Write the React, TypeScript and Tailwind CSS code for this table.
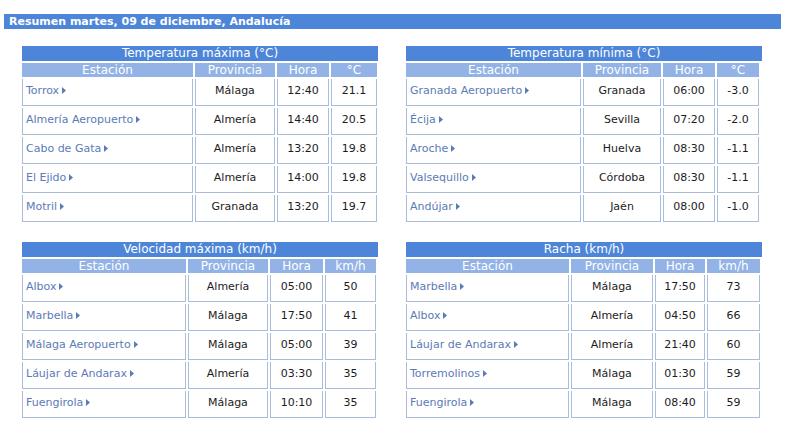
type Row = [string, string, string, string]

type Table = {
  title: string
  unit: string
  cols: string
  rows: Row[]
}

const tables: Table[] = [
  {
    title: "Temperatura máxima (°C)",
    unit: "°C",
    cols: "grid-cols-[171px_80px_52px_46px]",
    rows: [
      ["Torrox", "Málaga", "12:40", "21.1"],
      ["Almería Aeropuerto", "Almería", "14:40", "20.5"],
      ["Cabo de Gata", "Almería", "13:20", "19.8"],
      ["El Ejido", "Almería", "14:00", "19.8"],
      ["Motril", "Granada", "13:20", "19.7"],
    ],
  },
  {
    title: "Temperatura mínima (°C)",
    unit: "°C",
    cols: "grid-cols-[175px_78px_52px_42px]",
    rows: [
      ["Granada Aeropuerto", "Granada", "06:00", "-3.0"],
      ["Écija", "Sevilla", "07:20", "-2.0"],
      ["Aroche", "Huelva", "08:30", "-1.1"],
      ["Valsequillo", "Córdoba", "08:30", "-1.1"],
      ["Andújar", "Jaén", "08:00", "-1.0"],
    ],
  },
  {
    title: "Velocidad máxima (km/h)",
    unit: "km/h",
    cols: "grid-cols-[164px_80px_53px_51px]",
    rows: [
      ["Albox", "Almería", "05:00", "50"],
      ["Marbella", "Málaga", "17:50", "41"],
      ["Málaga Aeropuerto", "Málaga", "05:00", "39"],
      ["Láujar de Andarax", "Almería", "03:30", "35"],
      ["Fuengirola", "Málaga", "10:10", "35"],
    ],
  },
  {
    title: "Racha (km/h)",
    unit: "km/h",
    cols: "grid-cols-[163px_82px_50px_53px]",
    rows: [
      ["Marbella", "Málaga", "17:50", "73"],
      ["Albox", "Almería", "04:50", "66"],
      ["Láujar de Andarax", "Almería", "21:40", "60"],
      ["Torremolinos", "Málaga", "01:30", "59"],
      ["Fuengirola", "Málaga", "08:40", "59"],
    ],
  },
]

// little link arrow after station names
function Arrow() {
  return (
    <svg width="4" height="7" viewBox="0 0 4 7" className="relative top-[-1px] ml-[3px] inline-block">
      <path d="M0 0 L4 3.5 L0 7 Z" fill="#5b7bb6" />
    </svg>
  )
}

function DataTable({ t }: { t: Table }) {
  const cell =
    "h-[27px] border-x border-b border-[#a9bcd9] pt-[5px] leading-[14px] text-[#1c1c1c]"
  return (
    <div className="w-[356px]">
      <div className="h-[15px] bg-[#4d85d8] text-center text-[12px] leading-[15px] text-white">
        {t.title}
      </div>
      <div className={`mt-[2px] grid ${t.cols} gap-[2px]`}>
        {["Estación", "Provincia", "Hora", t.unit].map((h) => (
          <div
            key={h}
            className="h-[14px] bg-[#93b3e6] text-center text-[12px] leading-[14px] text-white"
          >
            {h}
          </div>
        ))}
        {t.rows.map((r) => (
          <div key={r[0]} className="contents">
            <div className={`${cell} pl-[3px]`}>
              <span className="text-[#5b7bb6]">{r[0]}</span>
              <Arrow />
            </div>
            <div className={`${cell} text-center`}>{r[1]}</div>
            <div className={`${cell} text-center`}>{r[2]}</div>
            <div className={`${cell} text-center`}>{r[3]}</div>
          </div>
        ))}
      </div>
    </div>
  )
}

export default function App() {
  return (
    <div className="w-[798px] h-[424px] bg-white pt-[14px] font-['DejaVu_Sans',Verdana,sans-serif] text-[11px]">
      <div className="ml-[4px] h-[15px] w-[777px] bg-[#4d85d8] pl-[5px] text-[11px] font-bold leading-[15px] text-white">
        Resumen martes, 09 de diciembre, Andalucía
      </div>
      <div className="grid grid-cols-[384px_384px] gap-y-[20px] pl-[22px] pt-[17px]">
        {tables.map((t) => (
          <DataTable key={t.title} t={t} />
        ))}
      </div>
    </div>
  )
}
